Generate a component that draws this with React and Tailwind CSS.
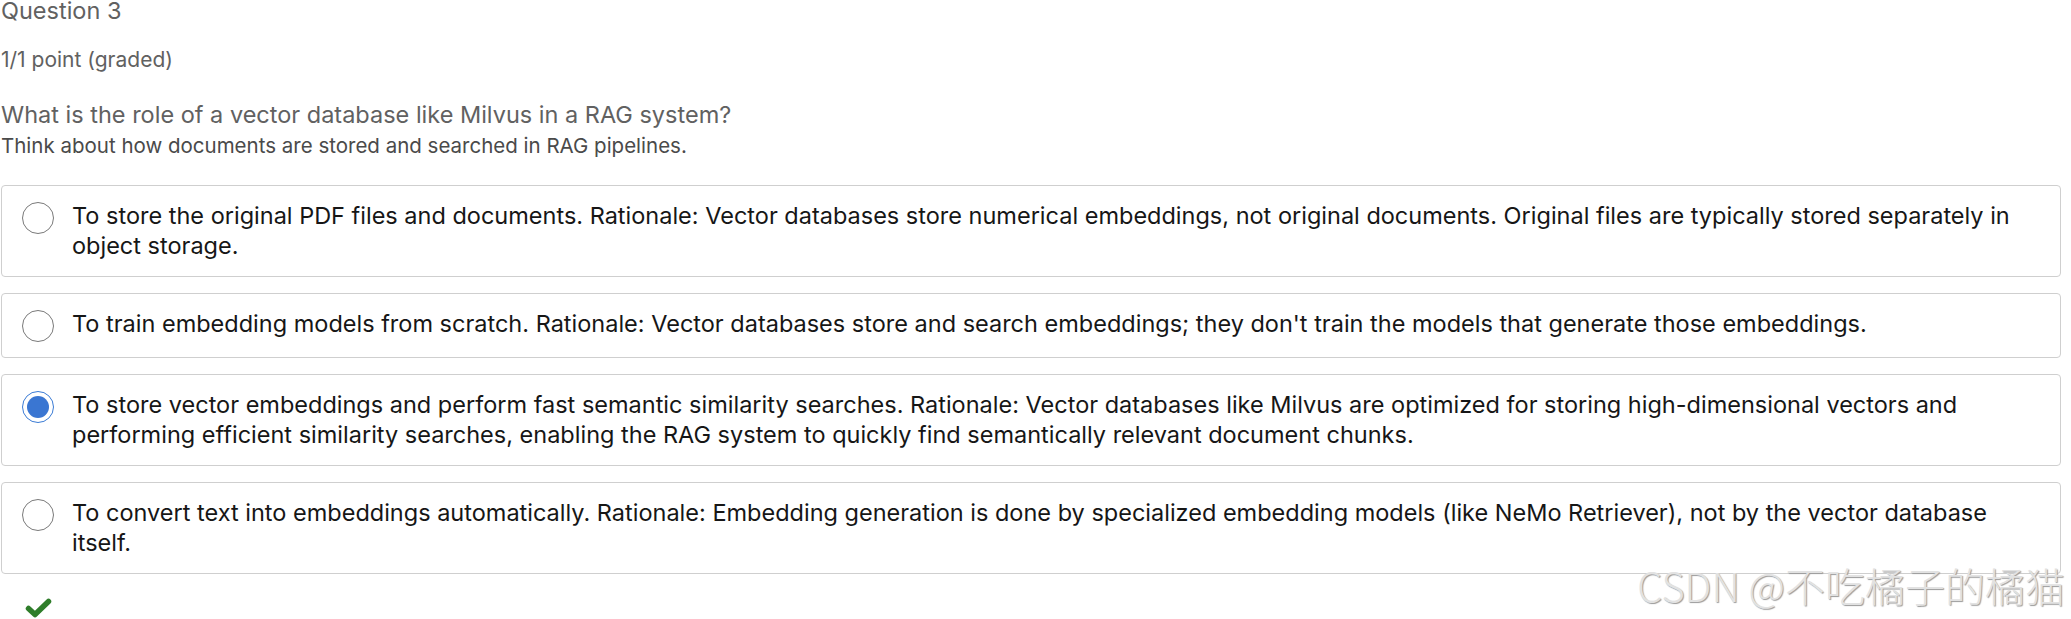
const options = [
  {
    id: 'a',
    text: 'To store the original PDF files and documents. Rationale: Vector databases store numerical embeddings, not original documents. Original files are typically stored separately in object storage.',
  },
  {
    id: 'b',
    text: "To train embedding models from scratch. Rationale: Vector databases store and search embeddings; they don't train the models that generate those embeddings.",
  },
  {
    id: 'c',
    text: 'To store vector embeddings and perform fast semantic similarity searches. Rationale: Vector databases like Milvus are optimized for storing high-dimensional vectors and performing efficient similarity searches, enabling the RAG system to quickly find semantically relevant document chunks.',
    selected: true,
  },
  {
    id: 'd',
    text: 'To convert text into embeddings automatically. Rationale: Embedding generation is done by specialized embedding models (like NeMo Retriever), not by the vector database itself.',
  },
];

function Radio({ checked }) {
  if (checked) {
    return (
      <span className="flex h-[32px] w-[32px] flex-none items-center justify-center rounded-full border-[1.5px] border-[#3a7bd5] bg-white">
        <span className="h-[22px] w-[22px] rounded-full bg-[#3a76d2]" />
      </span>
    );
  }
  return <span className="block h-[32px] w-[32px] flex-none rounded-full border-[1.5px] border-[#7a7a7a] bg-white" />;
}

export default function App() {
  return (
    <div className="relative min-h-[619px] bg-white pl-px pr-[10px] font-['Inter',sans-serif]">
      <h2 className="-mt-[3px] text-[23.5px] leading-[28px] text-[#616161]">Question 3</h2>
      <p className="mt-[23px] text-[21px] leading-[24px] text-[#616161]">1/1 point (graded)</p>

      <p className="mt-[29px] text-[23.5px] leading-[28px] text-[#616161]">What is the role of a vector database like Milvus in a RAG system?</p>
      <p className="mt-[5px] text-[20.5px] leading-[24px] text-[#4a4a4a]">Think about how documents are stored and searched in RAG pipelines.</p>

      <div className="mt-[27px] space-y-[16px]">
        {options.map((option) => (
          <label
            key={option.id}
            className="flex items-start gap-[18px] rounded-[4px] border border-[#cfcfcf] bg-white py-[15px] pl-[20px] pr-[24px]"
          >
            <span className="pt-[1px]">
              <Radio checked={option.selected} />
            </span>
            <span className="text-[23.5px] leading-[30px] text-[#161616]">{option.text}</span>
          </label>
        ))}
      </div>

      <div className="mt-[24px] pl-[24px]">
        <svg width="27" height="20" viewBox="0 0 27 20" className="block">
          <polyline points="3.5,10.5 10,16.5 23.5,3.5" fill="none" stroke="#2f7d2a" strokeWidth="5.5" strokeLinecap="round" strokeLinejoin="round" />
        </svg>
      </div>

      <div className="absolute bottom-[13px] right-[6px] font-['Noto_Sans_CJK_SC',sans-serif] text-[40px] font-light leading-none text-[#e2e2e2] [text-shadow:1px_1px_1px_#9a9a9a]">
        CSDN @不吃橘子的橘猫
      </div>
    </div>
  );
}
